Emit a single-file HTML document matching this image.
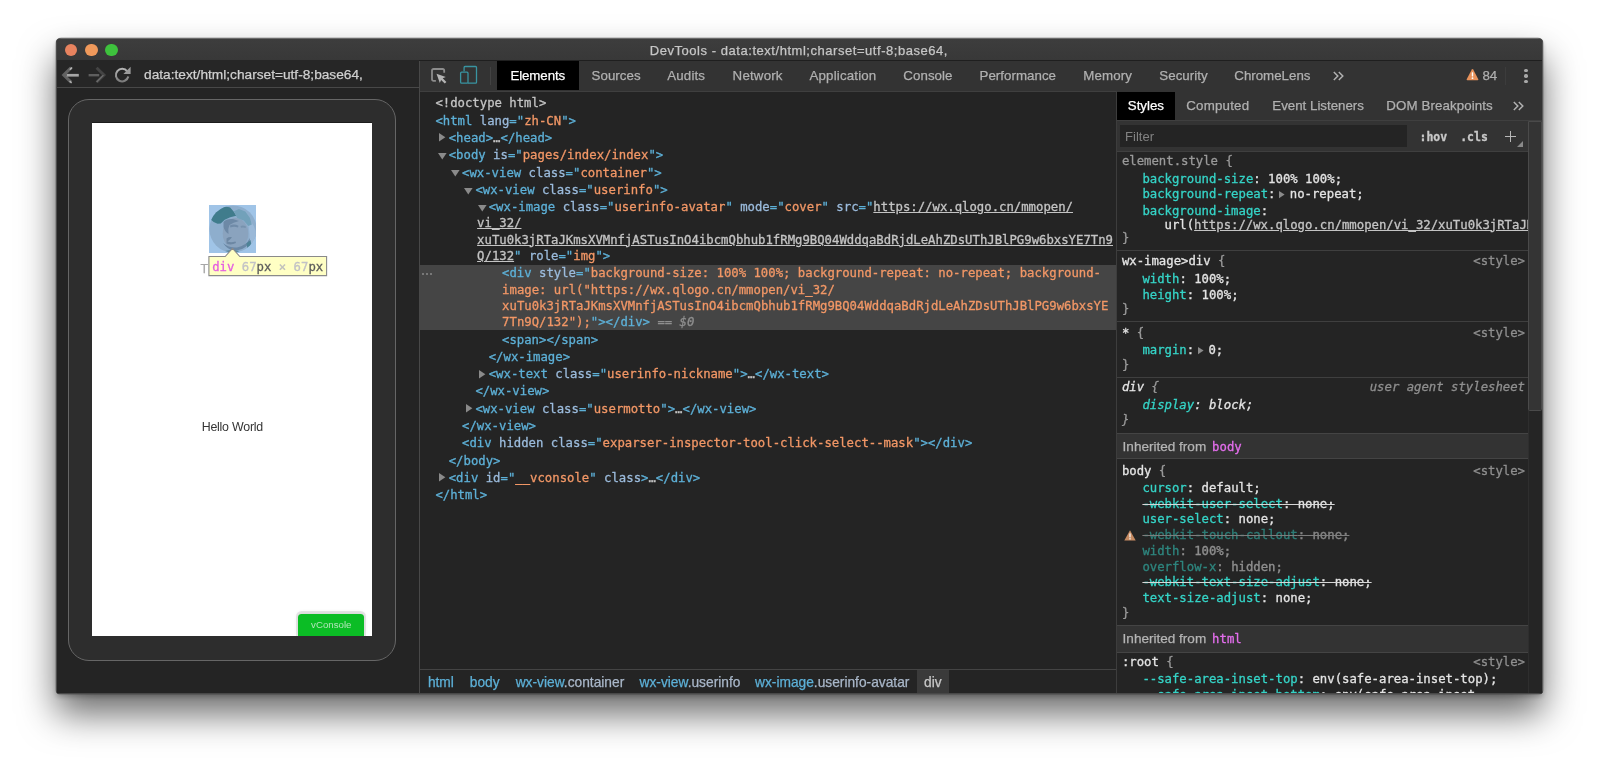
<!DOCTYPE html>
<html lang="en"><head><meta charset="utf-8"><title>DevTools</title><style>
html,body{margin:0;padding:0}
body{background:#fff;width:1600px;height:770px;position:relative;overflow:hidden}
.a{position:absolute}
.win{position:absolute;left:56.2px;top:37.8px;width:1487.4px;height:656.2px;background:#242424;border-radius:5px 5px 4px 4px;
 box-shadow:0 0 0 0.5px rgba(0,0,0,.3),0 3px 5px rgba(0,0,0,.22),0 20px 36px rgba(0,0,0,.58);overflow:hidden;will-change:transform}
.m{font-family:"DejaVu Sans Mono","Liberation Mono",monospace;font-size:12.29px;line-height:16px;white-space:pre;position:absolute;color:#d8d8d8;-webkit-text-stroke:.3px}
.s{font-family:"Liberation Sans",sans-serif;font-size:13.3px;line-height:16px;white-space:pre;position:absolute;color:#b0b0b0;-webkit-text-stroke:.25px}
.t{color:#5db0d7}.n{color:#9bbbdc}.v{color:#f29766}.g{color:#c4c4c4}.u{text-decoration:underline;color:#c4c4c4}
.p{color:#35d4c7}.w{color:#e4e4e4}.d{color:#9a9a9a}.x{text-decoration:line-through}
.i{font-style:italic}
</style></head><body>
<div class="win">
<div class="a" style="left:-0.20px;top:0.00px;width:1488.00px;height:22.90px;background:linear-gradient(#3d3d3d,#383838);border-top:1.5px solid #6a6a6a;box-sizing:border-box;border-bottom:1px solid #1f1f1f"></div>
<div class="a" style="left:8.70px;top:5.70px;width:12.60px;height:12.60px;border-radius:50%;background:#e8835f"></div>
<div class="a" style="left:29.00px;top:5.70px;width:12.60px;height:12.60px;border-radius:50%;background:#f0995b"></div>
<div class="a" style="left:49.30px;top:5.70px;width:12.60px;height:12.60px;border-radius:50%;background:#3ec23d"></div>
<div class="s " style="left:593.80px;top:4.70px;font-size:13px;letter-spacing:.54px;color:#c6c6c6">DevTools - data<span>:</span>text/html;charset=utf-8;base64,</div>
<div class="a" style="left:-0.20px;top:22.40px;width:363.00px;height:26.50px;background:#262626"></div>
<div class="a" style="left:-0.20px;top:48.50px;width:363.00px;height:1.40px;background:#484848"></div>
<div class="a" style="left:362.60px;top:22.70px;width:1.20px;height:633.00px;background:#484848"></div>
<div class="s " style="left:88.10px;top:28.90px;font-size:13.7px;color:#d0d0d0">data<span>:</span>text/html;charset=utf-8;base64,</div>
<div class="a" style="left:11.80px;top:61.20px;width:328.50px;height:561.50px;background:#2d2d2d;border:1px solid #666;border-radius:21px;box-sizing:border-box"></div>
<div class="a" style="left:35.50px;top:84.00px;width:280.50px;height:514.10px;background:#fff;border-top:1px solid #1c1c1c;box-sizing:border-box"></div>
<div class="a" style="left:363.80px;top:22.70px;width:1124.00px;height:30.00px;background:#333"></div>
<div class="a" style="left:363.80px;top:52.50px;width:1124.00px;height:0.80px;background:#3f3f3f"></div>
<div class="a" style="left:440.80px;top:22.70px;width:82.40px;height:29.80px;background:#000"></div>
<div class="s " style="left:454.40px;top:30.00px;color:#fff;letter-spacing:-0.08px">Elements</div>
<div class="s " style="left:535.50px;top:30.00px;letter-spacing:0.07px">Sources</div>
<div class="s " style="left:611.30px;top:30.00px;letter-spacing:0.15px">Audits</div>
<div class="s " style="left:676.60px;top:30.00px;letter-spacing:0.19px">Network</div>
<div class="s " style="left:753.50px;top:30.00px;letter-spacing:0.17px">Application</div>
<div class="s " style="left:847.30px;top:30.00px;letter-spacing:0.07px">Console</div>
<div class="s " style="left:923.50px;top:30.00px;letter-spacing:0.04px">Performance</div>
<div class="s " style="left:1027.30px;top:30.00px;letter-spacing:0.13px">Memory</div>
<div class="s " style="left:1103.30px;top:30.00px;letter-spacing:0.05px">Security</div>
<div class="s " style="left:1178.30px;top:30.00px;letter-spacing:0px">ChromeLens</div>
<div class="s " style="left:1426.40px;top:30.00px;">84</div>
<div class="a" style="left:363.80px;top:227.20px;width:696.50px;height:65.30px;background:#454545"></div>
<div class="m " style="left:379.40px;top:57.30px;"><span class="g">&lt;!doctype html&gt;</span></div>
<div class="m " style="left:379.40px;top:74.60px;"><span class="t">&lt;html</span> <span class="n">lang</span><span class="t">="</span><span class="v">zh-CN</span><span class="t">"</span><span class="t">&gt;</span></div>
<div class="m " style="left:392.73px;top:91.90px;"><span class="t">&lt;head&gt;</span><span class="g">…</span><span class="t">&lt;/head&gt;</span></div>
<svg class="a" style="left:383.03px;top:95.30px" width="7" height="9" viewBox="0 0 7 9"><polygon points="0,0 6.4,4.3 0,8.6" fill="#8a8a8a"/></svg>
<div class="m " style="left:392.73px;top:109.20px;"><span class="t">&lt;body</span> <span class="n">is</span><span class="t">="</span><span class="v">pages/index/index</span><span class="t">"</span><span class="t">&gt;</span></div>
<svg class="a" style="left:381.83px;top:115.00px" width="9" height="7" viewBox="0 0 9 7"><polygon points="0,0 8.6,0 4.3,6.4" fill="#8a8a8a"/></svg>
<div class="m " style="left:406.06px;top:126.50px;"><span class="t">&lt;wx-view</span> <span class="n">class</span><span class="t">="</span><span class="v">container</span><span class="t">"</span><span class="t">&gt;</span></div>
<svg class="a" style="left:395.16px;top:132.30px" width="9" height="7" viewBox="0 0 9 7"><polygon points="0,0 8.6,0 4.3,6.4" fill="#8a8a8a"/></svg>
<div class="m " style="left:419.39px;top:143.80px;"><span class="t">&lt;wx-view</span> <span class="n">class</span><span class="t">="</span><span class="v">userinfo</span><span class="t">"</span><span class="t">&gt;</span></div>
<svg class="a" style="left:408.49px;top:149.60px" width="9" height="7" viewBox="0 0 9 7"><polygon points="0,0 8.6,0 4.3,6.4" fill="#8a8a8a"/></svg>
<div class="m " style="left:432.72px;top:161.10px;"><span class="t">&lt;wx-image</span> <span class="n">class</span><span class="t">="</span><span class="v">userinfo-avatar</span><span class="t">"</span> <span class="n">mode</span><span class="t">="</span><span class="v">cover</span><span class="t">"</span> <span class="n">src</span><span class="t">="</span><span class="u">https://wx.qlogo.cn/mmopen/</span></div>
<div class="m " style="left:421.10px;top:177.40px;"><span class="u">vi_32/</span></div>
<div class="m " style="left:421.10px;top:193.70px;"><span class="u">xuTu0k3jRTaJKmsXVMnfjASTusInO4ibcmQbhub1fRMg9BQ04WddqaBdRjdLeAhZDsUThJBlPG9w6bxsYE7Tn9</span></div>
<div class="m " style="left:421.10px;top:210.00px;"><span class="u">Q/132</span><span class="t">"</span> <span class="n">role</span><span class="t">="</span><span class="v">img</span><span class="t">"</span><span class="t">&gt;</span></div>
<svg class="a" style="left:421.82px;top:166.90px" width="9" height="7" viewBox="0 0 9 7"><polygon points="0,0 8.6,0 4.3,6.4" fill="#8a8a8a"/></svg>
<div class="m " style="left:446.05px;top:227.30px;"><span class="t">&lt;div</span> <span class="n">style</span><span class="t">="</span><span class="v">background-size: 100% 100%; background-repeat: no-repeat; background-</span></div>
<div class="m " style="left:446.10px;top:243.60px;"><span class="v">image: url("</span><span class="v">https://wx.qlogo.cn/mmopen/vi_32/</span></div>
<div class="m " style="left:446.10px;top:259.90px;"><span class="v">xuTu0k3jRTaJKmsXVMnfjASTusInO4ibcmQbhub1fRMg9BQ04WddqaBdRjdLeAhZDsUThJBlPG9w6bxsYE</span></div>
<div class="m " style="left:446.10px;top:276.20px;"><span class="v">7Tn9Q/132");</span><span class="t">"&gt;&lt;/div&gt;</span><span style="color:#8f8f8f"> == <i>$0</i></span></div>
<div class="m " style="left:446.05px;top:293.50px;"><span class="t">&lt;span&gt;&lt;/span&gt;</span></div>
<div class="m " style="left:432.72px;top:310.80px;"><span class="t">&lt;/wx-image&gt;</span></div>
<div class="m " style="left:432.72px;top:328.10px;"><span class="t">&lt;wx-text</span> <span class="n">class</span><span class="t">="</span><span class="v">userinfo-nickname</span><span class="t">"</span><span class="t">&gt;</span><span class="g">…</span><span class="t">&lt;/wx-text&gt;</span></div>
<svg class="a" style="left:423.02px;top:331.50px" width="7" height="9" viewBox="0 0 7 9"><polygon points="0,0 6.4,4.3 0,8.6" fill="#8a8a8a"/></svg>
<div class="m " style="left:419.39px;top:345.40px;"><span class="t">&lt;/wx-view&gt;</span></div>
<div class="m " style="left:419.39px;top:362.70px;"><span class="t">&lt;wx-view</span> <span class="n">class</span><span class="t">="</span><span class="v">usermotto</span><span class="t">"</span><span class="t">&gt;</span><span class="g">…</span><span class="t">&lt;/wx-view&gt;</span></div>
<svg class="a" style="left:409.69px;top:366.10px" width="7" height="9" viewBox="0 0 7 9"><polygon points="0,0 6.4,4.3 0,8.6" fill="#8a8a8a"/></svg>
<div class="m " style="left:406.06px;top:380.00px;"><span class="t">&lt;/wx-view&gt;</span></div>
<div class="m " style="left:406.06px;top:397.30px;"><span class="t">&lt;div</span> <span class="n">hidden</span> <span class="n">class</span><span class="t">="</span><span class="v">exparser-inspector-tool-click-select--mask</span><span class="t">"</span><span class="t">&gt;&lt;/div&gt;</span></div>
<div class="m " style="left:392.73px;top:414.60px;"><span class="t">&lt;/body&gt;</span></div>
<div class="m " style="left:392.73px;top:431.90px;"><span class="t">&lt;div</span> <span class="n">id</span><span class="t">="</span><span class="v">__vconsole</span><span class="t">"</span> <span class="n">class</span><span class="t">&gt;</span><span class="g">…</span><span class="t">&lt;/div&gt;</span></div>
<svg class="a" style="left:383.03px;top:435.30px" width="7" height="9" viewBox="0 0 7 9"><polygon points="0,0 6.4,4.3 0,8.6" fill="#8a8a8a"/></svg>
<div class="m " style="left:379.40px;top:449.20px;"><span class="t">&lt;/html&gt;</span></div>
<div class="a" style="left:366.00px;top:235.10px;width:2.20px;height:2.20px;background:#8a8a8a;border-radius:50%"></div>
<div class="a" style="left:370.10px;top:235.10px;width:2.20px;height:2.20px;background:#8a8a8a;border-radius:50%"></div>
<div class="a" style="left:374.20px;top:235.10px;width:2.20px;height:2.20px;background:#8a8a8a;border-radius:50%"></div>
<div class="a" style="left:363.80px;top:630.80px;width:696.50px;height:1.10px;background:#444"></div>
<div class="a" style="left:860.70px;top:632.20px;width:32.00px;height:23.50px;background:#3a3a3a"></div>
<div class="s " style="left:371.90px;top:636.60px;font-size:13.75px"><span class="t">html</span></div>
<div class="s " style="left:413.80px;top:636.60px;font-size:13.75px"><span class="t">body</span></div>
<div class="s " style="left:459.70px;top:636.60px;font-size:13.75px"><span class="t">wx-view</span><span style="color:#a9b7c9">.container</span></div>
<div class="s " style="left:583.50px;top:636.60px;font-size:13.75px"><span class="t">wx-view</span><span style="color:#a9b7c9">.userinfo</span></div>
<div class="s " style="left:699.00px;top:636.60px;font-size:13.75px"><span class="t">wx-image</span><span style="color:#a9b7c9">.userinfo-avatar</span></div>
<div class="s " style="left:868.00px;top:636.60px;font-size:13.75px;color:#c8c8c8">div</div>
<div class="a" style="left:1059.80px;top:53.20px;width:1.00px;height:603.00px;background:#3d3d3d"></div>
<div class="a" style="left:1060.80px;top:53.20px;width:427.00px;height:29.70px;background:#333"></div>
<div class="a" style="left:1060.80px;top:53.50px;width:58.00px;height:28.50px;background:#000"></div>
<div class="a" style="left:1060.80px;top:82.20px;width:427.00px;height:0.90px;background:#3f3f3f"></div>
<div class="a" style="left:1060.80px;top:83.10px;width:411.50px;height:29.60px;background:#333"></div>
<div class="a" style="left:1060.80px;top:112.50px;width:411.50px;height:0.80px;background:#3f3f3f"></div>
<div class="a" style="left:1063.80px;top:87.20px;width:287.20px;height:22.00px;background:#242424"></div>
<div class="s " style="left:1071.80px;top:60.10px;color:#fff">Styles</div>
<div class="s " style="left:1130.30px;top:60.10px;letter-spacing:.2px">Computed</div>
<div class="s " style="left:1216.30px;top:60.10px;">Event Listeners</div>
<div class="s " style="left:1330.30px;top:60.10px;letter-spacing:.1px">DOM Breakpoints</div>
<div class="s " style="left:1069.10px;top:91.40px;font-size:13px;color:#828282;-webkit-text-stroke:0">Filter</div>
<div class="m " style="left:1363.50px;top:90.50px;font-weight:bold;font-size:11.5px;color:#c8c8c8">:hov</div>
<div class="m " style="left:1404.20px;top:90.50px;font-weight:bold;font-size:11.5px;color:#c8c8c8">.cls</div>
<div class="a" style="left:1448.60px;top:97.60px;width:11.20px;height:1.30px;background:#b8b8b8"></div>
<div class="a" style="left:1453.55px;top:92.60px;width:1.30px;height:11.20px;background:#b8b8b8"></div>
<svg class="a" style="left:1460.8px;top:103.2px" width="6" height="6" viewBox="0 0 6 6"><polygon points="6,0 6,6 0,6" fill="#8a8a8a"/></svg>
<div class="a" style="left:1471.80px;top:83.20px;width:15.00px;height:573.00px;background:#252525;border-left:1px solid #2e2e2e;box-sizing:border-box"></div>
<div class="a" style="left:1471.80px;top:83.40px;width:14.30px;height:289.60px;background:#343434;border:1px solid #4a4a4a;box-sizing:border-box;border-radius:0 0 1.5px 1.5px"></div>
<div class="m " style="left:1065.90px;top:114.50px;"><span class="d">element.style</span><span class="d"> {</span></div>
<div class="m " style="left:1086.40px;top:133.10px;"><span class="p">background-size</span><span class="w">: 100% 100%;</span></div>
<div class="m " style="left:1086.40px;top:148.30px;"><span class="p">background-repeat</span><span class="w">:</span></div>
<svg class="a" style="left:1223.05px;top:153.30px" width="6" height="8" viewBox="0 0 6 8"><polygon points="0,0 5.6,3.6 0,7.2" fill="#8a8a8a"/></svg>
<div class="m " style="left:1233.81px;top:148.30px;"><span class="w">no-repeat;</span></div>
<div class="m " style="left:1086.40px;top:164.50px;"><span class="p">background-image</span><span class="w">:</span></div>
<div class="m" style="left:1108.50px;top:178.80px;width:363.8px;overflow:hidden"><span class="w">url(</span><span class="u">https://wx.qlogo.cn/mmopen/vi_32/xuTu0k3jRTaJKmsXVMnfjASTusInO4ibcmQbhub1fRMg9BQ04WddqaBdRjdLeAhZDsUThJBlPG9w6bxsYE7Tn9Q/132</span><span class="w">);</span></div>
<div class="m " style="left:1066.00px;top:192.20px;"><span class="d">}</span></div>
<div class="a" style="left:1060.80px;top:212.10px;width:411.50px;height:1.00px;background:#3f3f3f"></div>
<div class="m " style="left:1065.90px;top:215.20px;"><span class="w">wx-image&gt;div</span><span class="d"> {</span></div>
<div class="m" style="right:18.40px;top:215.20px;color:#8f8f8f;">&lt;style&gt;</div>
<div class="m " style="left:1086.40px;top:233.10px;"><span class="p">width</span><span class="w">: 100%;</span></div>
<div class="m " style="left:1086.40px;top:248.50px;"><span class="p">height</span><span class="w">: 100%;</span></div>
<div class="m " style="left:1066.00px;top:263.10px;"><span class="d">}</span></div>
<div class="a" style="left:1060.80px;top:283.10px;width:411.50px;height:1.00px;background:#3f3f3f"></div>
<div class="m " style="left:1065.90px;top:287.10px;"><span class="w">*</span><span class="d"> {</span></div>
<div class="m" style="right:18.40px;top:287.10px;color:#8f8f8f;">&lt;style&gt;</div>
<div class="m " style="left:1086.40px;top:303.50px;"><span class="p">margin</span><span class="w">:</span></div>
<svg class="a" style="left:1141.68px;top:308.50px" width="6" height="8" viewBox="0 0 6 8"><polygon points="0,0 5.6,3.6 0,7.2" fill="#8a8a8a"/></svg>
<div class="m " style="left:1152.44px;top:303.50px;"><span class="w">0;</span></div>
<div class="m " style="left:1066.00px;top:319.20px;"><span class="d">}</span></div>
<div class="a" style="left:1060.80px;top:338.70px;width:411.50px;height:1.00px;background:#3f3f3f"></div>
<div class="m " style="left:1065.90px;top:340.70px;font-style:italic"><span class="w">div</span><span class="d"> {</span></div>
<div class="m" style="right:18.40px;top:340.70px;color:#8f8f8f;font-style:italic;">user agent stylesheet</div>
<div class="m " style="left:1086.40px;top:359.10px;font-style:italic"><span class="p">display</span><span class="w">: block;</span></div>
<div class="m " style="left:1066.00px;top:374.40px;font-style:italic"><span class="d">}</span></div>
<div class="a" style="left:1060.80px;top:395.00px;width:411.50px;height:26.40px;background:#333;border-top:1px solid #444;border-bottom:1px solid #444;box-sizing:border-box"></div>
<div class="s " style="left:1066.60px;top:401.00px;font-size:13.55px;color:#b4b4b4">Inherited from</div>
<div class="m " style="left:1156.10px;top:400.80px;"><span style="color:#e36eec">body</span></div>
<div class="m " style="left:1065.90px;top:424.80px;"><span class="w">body</span><span class="d"> {</span></div>
<div class="m" style="right:18.40px;top:424.80px;color:#8f8f8f;">&lt;style&gt;</div>
<div class="m " style="left:1086.40px;top:442.10px;"><span class="p">cursor</span><span class="w">: default;</span></div>
<div class="m x" style="left:1086.40px;top:457.80px;"><span class="p">-webkit-user-select</span><span class="w">: none;</span></div>
<div class="m " style="left:1086.40px;top:473.30px;"><span class="p">user-select</span><span class="w">: none;</span></div>
<div class="m x" style="left:1086.40px;top:488.90px;opacity:.5"><span class="p">-webkit-touch-callout</span><span class="w">: none;</span></div>
<div class="m " style="left:1086.40px;top:504.70px;opacity:.55"><span class="p">width</span><span class="w">: 100%;</span></div>
<div class="m " style="left:1086.40px;top:520.50px;opacity:.55"><span class="p">overflow-x</span><span class="w">: hidden;</span></div>
<div class="m x" style="left:1086.40px;top:536.30px;"><span class="p">-webkit-text-size-adjust</span><span class="w">: none;</span></div>
<div class="m " style="left:1086.40px;top:551.80px;"><span class="p">text-size-adjust</span><span class="w">: none;</span></div>
<div class="m " style="left:1066.00px;top:566.50px;"><span class="d">}</span></div>
<div class="a" style="left:1060.80px;top:586.80px;width:411.50px;height:27.80px;background:#333;border-top:1px solid #444;border-bottom:1px solid #444;box-sizing:border-box"></div>
<div class="s " style="left:1066.60px;top:592.70px;font-size:13.55px;color:#b4b4b4">Inherited from</div>
<div class="m " style="left:1156.10px;top:593.30px;"><span style="color:#e36eec">html</span></div>
<div class="m " style="left:1065.90px;top:616.10px;"><span class="w">:root</span><span class="d"> {</span></div>
<div class="m" style="right:18.40px;top:616.10px;color:#8f8f8f;">&lt;style&gt;</div>
<div class="m " style="left:1086.40px;top:633.40px;"><span class="p">--safe-area-inset-top</span><span class="w">: env(safe-area-inset-top);</span></div>
<div class="m " style="left:1086.40px;top:649.20px;"><span class="p">--safe-area-inset-bottom</span><span class="w">: env(safe-area-inset-</span></div>
<svg class="a" style="left:1068.3px;top:491.7px" width="12" height="11" viewBox="0 0 12 11"><path d="M6 0.3 L11.7 10.6 H0.3 Z" fill="#c58a62"/><rect x="5.3" y="3.4" width="1.4" height="4" fill="#fff" opacity=".85"/><rect x="5.3" y="8.1" width="1.4" height="1.4" fill="#fff" opacity=".85"/></svg>
<svg class="a" style="left:373.80px;top:29.20px" width="18" height="17" viewBox="0 0 18 17"><path d="M5.9 13.8 H3.6 Q2 13.8 2 12.2 V3.6 Q2 2 3.6 2 H12.6 Q14.2 2 14.2 3.6 V5.7" fill="none" stroke="#8c8c8c" stroke-width="1.8"/><path d="M6.5 6.7 L15.8 10 L12.7 11.3 L16.4 15 L14.8 16.6 L11.1 12.9 L9.8 16 Z" fill="#b4b4b4"/></svg>
<svg class="a" style="left:402.80px;top:27.20px" width="20" height="20" viewBox="0 0 20 20"><path d="M5.1 6.2 V2.4 Q5.1 1.5 6 1.5 H16.6 Q17.5 1.5 17.5 2.4 V17.3 Q17.5 18.2 16.6 18.2 H9" fill="none" stroke="#3994a1" stroke-width="1.3"/><rect x="1.6" y="7.2" width="7.4" height="11" rx="1" fill="none" stroke="#3994a1" stroke-width="1.3"/></svg>
<div class="a" style="left:433.80px;top:29.20px;width:1.00px;height:17.50px;background:#424242"></div>
<svg class="a" style="left:1277.30px;top:32.70px" width="11" height="10" viewBox="0 0 11 10"><path d="M0.8 1 L4.8 5 L0.8 9 M5.8 1 L9.8 5 L5.8 9" fill="none" stroke="#b0b0b0" stroke-width="1.5"/></svg>
<svg class="a" style="left:1457.00px;top:63.00px" width="11" height="10" viewBox="0 0 11 10"><path d="M0.8 1 L4.8 5 L0.8 9 M5.8 1 L9.8 5 L5.8 9" fill="none" stroke="#b0b0b0" stroke-width="1.5"/></svg>
<svg class="a" style="left:1409.80px;top:30.20px" width="13" height="13" viewBox="0 0 13 13"><path d="M6.5 0.9 Q6.9 0.9 7.2 1.4 L12.3 11.3 Q12.6 12.3 11.6 12.3 H1.4 Q0.4 12.3 0.7 11.3 L5.8 1.4 Q6.1 0.9 6.5 0.9Z" fill="#e8925b"/><rect x="5.8" y="4.2" width="1.4" height="4.4" rx=".6" fill="#fff"/><circle cx="6.5" cy="10.2" r=".9" fill="#fff"/></svg>
<div class="a" style="left:1449.10px;top:29.20px;width:1.00px;height:17.50px;background:#3c3c3c"></div>
<div class="a" style="left:1468.30px;top:30.50px;width:3.40px;height:3.40px;background:#a8a8a8;border-radius:50%"></div>
<div class="a" style="left:1468.30px;top:36.20px;width:3.40px;height:3.40px;background:#a8a8a8;border-radius:50%"></div>
<div class="a" style="left:1468.30px;top:41.80px;width:3.40px;height:3.40px;background:#a8a8a8;border-radius:50%"></div>
<svg class="a" style="left:4.80px;top:28.20px" width="20" height="18" viewBox="0 0 20 18"><path d="M10.2 1.7 L2.8 9 L10.2 16.3" fill="none" stroke="#626262" stroke-width="3.1"/><rect x="5.6" y="7.9" width="12.2" height="2.7" fill="#a6a6a6"/><path d="M8.2 3.2 L10.6 0.9 L11.6 2 L9.6 4Z M9 14.6 L11 16.6 L10.2 17.4 L8.2 15.5Z" fill="#b9b9b9"/></svg>
<svg class="a" style="left:31.30px;top:28.20px" width="20" height="18" viewBox="0 0 20 18"><path d="M9.6 1.7 L17 9 L9.6 16.3" fill="none" stroke="#444" stroke-width="2.9"/><rect x="1.6" y="8" width="10.6" height="2.4" fill="#5e5e5e"/><path d="M9.2 15.6 L16 8.8 L16.8 9.6 L10 16.6Z" fill="#707070"/></svg>
<svg class="a" style="left:55.80px;top:27.20px" width="21" height="20" viewBox="0 0 21 20"><defs><linearGradient id="gb" x1="0" y1="0" x2="0" y2="1"><stop offset="0" stop-color="#b4b4b4"/><stop offset="1" stop-color="#7c7c7c"/></linearGradient></defs><path d="M15.2 6.3 A6.3 6.3 0 1 0 16.3 11.6" fill="none" stroke="url(#gb)" stroke-width="2.1"/><path d="M18.6 1.8 V9 H11.4 Z" fill="#9a9a9a"/></svg>
<div class="s " style="left:145.70px;top:381.30px;font-size:12.4px;letter-spacing:-.23px;color:#353535;-webkit-text-stroke:0">Hello World</div>
<div class="a" style="left:242.10px;top:576.30px;width:66.30px;height:21.80px;background:#0bbd25;border-radius:3.5px 3.5px 0 0;box-shadow:0 -1px 0 2px rgba(0,0,0,.085),0 -1px 5px rgba(0,0,0,.1);clip-path:inset(-6px -6px 0 -6px)"></div>
<div class="s " style="left:255.10px;top:579.00px;font-size:9.7px;color:#b0e4b8;-webkit-text-stroke:0">vConsole</div>
<div class="s " style="left:144.60px;top:222.50px;font-size:12.5px;color:#a8a8a8">T</div>
<svg class="a" style="left:152.60px;top:167.30px" width="47.3" height="47.7" viewBox="0 0 47.3 47.7"><defs><clipPath id="cc"><circle cx="24" cy="24" r="23.6"/></clipPath><filter id="bl" x="-5%" y="-5%" width="110%" height="110%"><feGaussianBlur stdDeviation="0.7"/></filter></defs><rect width="48" height="48" fill="#a0c4e7"/><circle cx="24" cy="24" r="23.6" fill="#8eaecd"/><g clip-path="url(#cc)"><g filter="url(#bl)"><path d="M38 14 Q48 20 47 32 Q44 40 40 42 Q42 30 38 14Z" fill="#9bb9d8"/><ellipse cx="26.5" cy="28.5" rx="12.8" ry="15.5" fill="#8aa3be"/><path d="M14.5 17 Q17 13.5 24 14 L30 16 Q24 17.5 20.5 20 Q18.5 24 19.5 29 Q16 27 14.5 22Z" fill="#6d89a6"/><path d="M21 20.5 Q25 18.5 29.5 20.8 L29 22.6 Q25 21 21.4 22.6Z" fill="#6f8ba8"/><path d="M31.5 21 Q34.5 20 37 21.5 L36.6 23 Q34.4 22 32 22.8Z" fill="#7792ae"/><path d="M17.5 33.5 Q20 31.5 23 32.2 Q21.5 34.5 18.5 36.5 Q22 38 26.5 36.4 L27 38 Q22 40.5 17.5 38.5Z" fill="#6c87a3"/><path d="M14 38 Q18 44 24 45.5 Q34 46 39.5 39 Q41 36 41 33 Q37 41 28 42.5 Q20 43 14 38Z" fill="#6b88a6"/><path d="M37.5 38.5 L41.5 35 L42.5 40 L38.5 44Z" fill="#4d8397"/><path d="M16 46 Q24 44 30 46 L28 49 H18Z" fill="#5a8a9e"/><path d="M1.8 14.5 L3.8 8.2 L9.3 3.1 L15.7 1.2 L21.2 2.6 L24.8 6.7 L27.2 10.8 L21.2 12.3 L15.7 14.7 L11.7 18.6 L8.6 18.8 L4.6 17Z" fill="#3f7c8c"/><path d="M25 6.2 L29.9 4 L36.3 6.5 L41 12.9 L42.8 19.4 L39.4 21 L34.7 15.5 L28.3 12.9 L26.9 10.4Z" fill="#72a1ba"/></g></g></svg>
<svg class="a" style="left:151.80px;top:209.20px" width="120" height="30" viewBox="0 0 120 30"><path d="M0.9 9.5 H17.2 L24.5 1.4 L31.8 9.5 H118.6 V28.6 H0.9 Z" fill="#ffffc4" stroke="#8a8a8a" stroke-width="1.1"/></svg>
<div class="m " style="left:156.20px;top:220.50px;"><span style="color:#e45fe0">div</span> <span style="color:#c2c2c6">67</span><span style="color:#5c5c5c">px</span> <span style="color:#bdbdbd">×</span> <span style="color:#c2c2c6">67</span><span style="color:#5c5c5c">px</span></div>
<div class="a" style="left:0.00px;top:654.70px;width:1487.40px;height:1.80px;background:#484848"></div>
<div class="a" style="left:0.00px;top:1.70px;width:1.40px;height:654.00px;background:#4e4e4e"></div>
<div class="a" style="left:1486.00px;top:1.70px;width:1.50px;height:654.00px;background:#585858"></div>
</div>
</body></html>
